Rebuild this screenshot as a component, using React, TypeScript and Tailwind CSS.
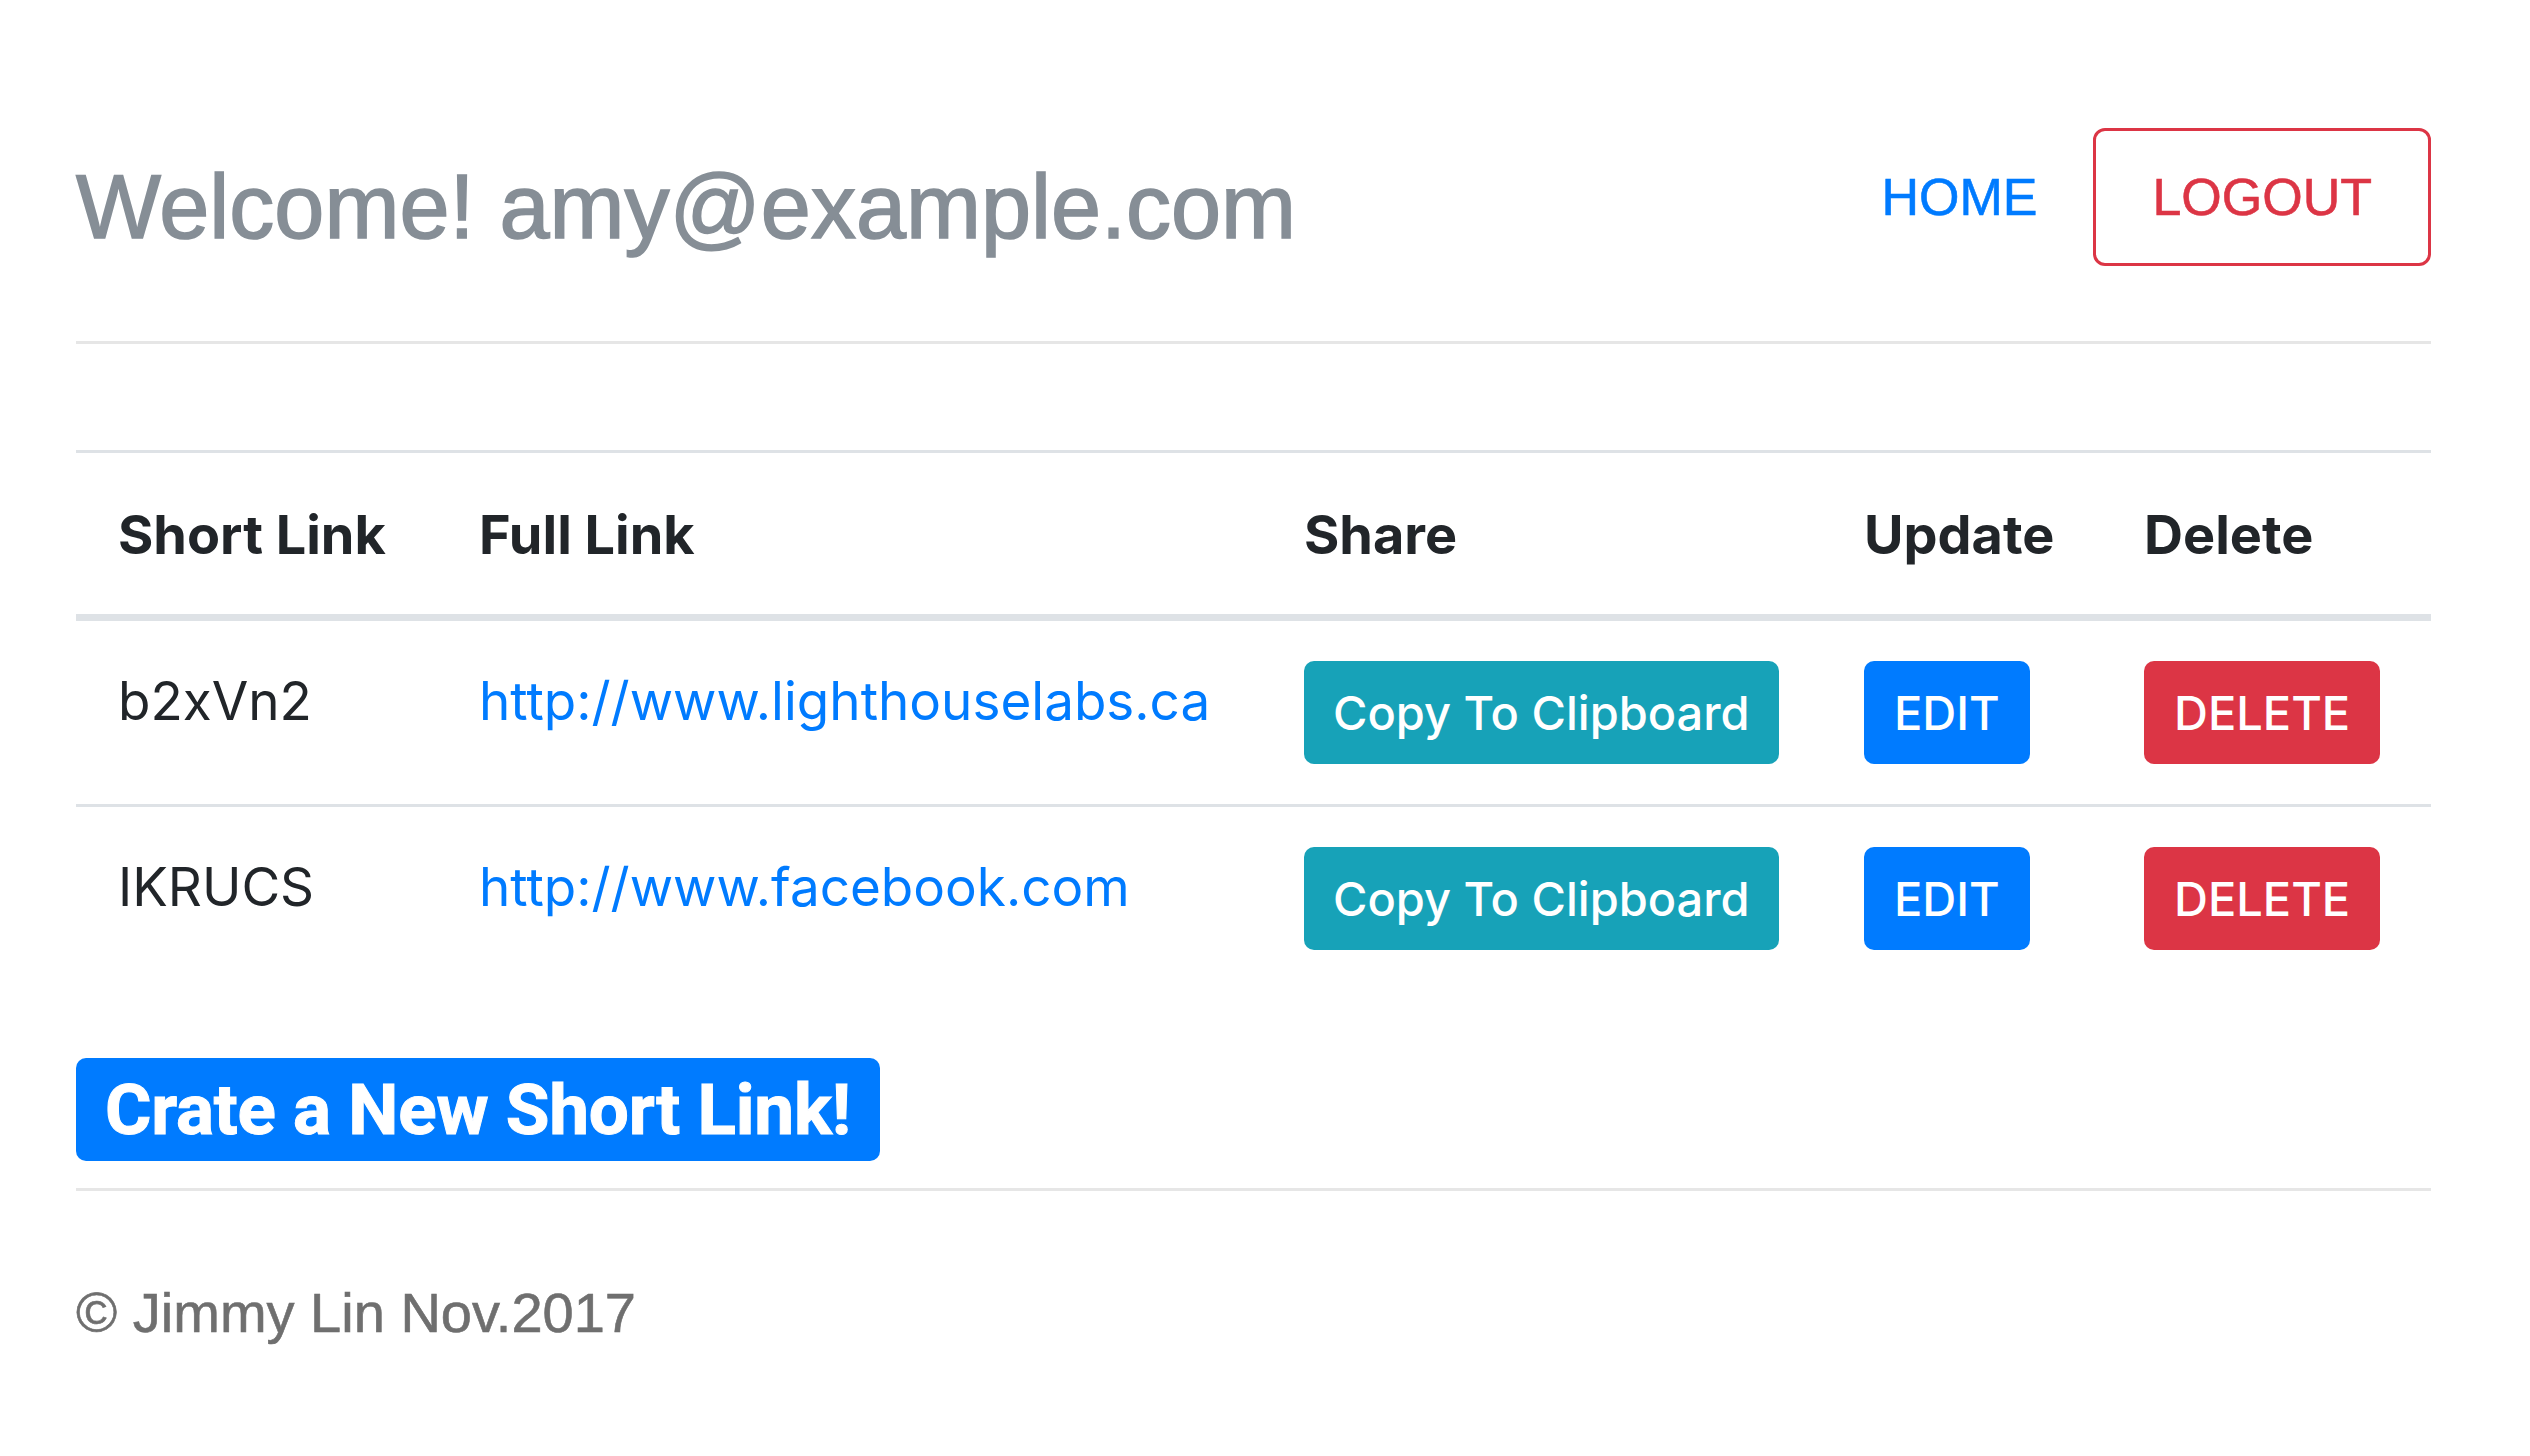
import React from "react";

const links = [
  { id: "b2xVn2", url: "http://www.lighthouselabs.ca" },
  { id: "IKRUCS", url: "http://www.facebook.com" },
];

const App = () => {
  return (
    <div className="min-h-[1456px] bg-white pl-[76px] pr-[99px] pt-[128px]">
      {/* header */}
      <div className="flex items-start justify-between">
        <h1 className="mt-[34px] font-['Liberation_Sans',Arial,sans-serif] text-[90px] leading-[90px] font-normal text-[#868e96] [-webkit-text-stroke:1.6px_#868e96]">
          Welcome! amy@example.com
        </h1>
        <div className="flex items-center gap-[56px] font-['Liberation_Sans',Arial,sans-serif] text-[52px]">
          <a className="text-[#007bff] leading-[60px] [-webkit-text-stroke:0.6px_#007bff]">HOME</a>
          <button className="h-[138px] rounded-[12px] border-[3px] border-[#dc3545] px-[56px] leading-[132px] text-[#dc3545] [-webkit-text-stroke:0.6px_#dc3545]">
            LOGOUT
          </button>
        </div>
      </div>
      <hr className="mt-[75px] border-0 border-t-[3px] border-[#e6e6e6]" />

      {/* table of links */}
      <table className="mt-[106px] w-full table-fixed border-t-[3px] border-[#dee2e6] font-['Inter',sans-serif] text-[#212529]">
        <colgroup>
          <col className="w-[361px]" />
          <col className="w-[825px]" />
          <col className="w-[560px]" />
          <col className="w-[280px]" />
          <col className="w-[329px]" />
        </colgroup>
        <thead>
          <tr className="border-b-[7px] border-[#dee2e6]">
            {["Short Link", "Full Link", "Share", "Update", "Delete"].map((h) => (
              <th key={h} className="px-[42px] pt-[42px] pb-[39px] text-left align-top text-[54px] leading-[80px] font-bold">
                {h}
              </th>
            ))}
          </tr>
        </thead>
        <tbody>
          {links.map((link, i) => (
            <tr key={link.id} className={i > 0 ? "border-t-[3px] border-[#dee2e6]" : ""}>
              <td className="px-[42px] py-[40px] align-top text-[53px] leading-[80px]">{link.id}</td>
              <td className="px-[42px] py-[40px] align-top text-[53px] leading-[80px]">
                <a className="text-[#007bff]">{link.url}</a>
              </td>
              <td className="px-[42px] py-[40px] align-top">
                <button className="flex h-[103px] items-center whitespace-nowrap rounded-[10px] bg-[#17a2b8] px-[29px] text-[47px] font-medium leading-none text-white">
                  Copy To Clipboard
                </button>
              </td>
              <td className="px-[42px] py-[40px] align-top">
                <button className="flex h-[103px] items-center rounded-[10px] bg-[#007bff] px-[30px] text-[47px] font-medium leading-none text-white">
                  EDIT
                </button>
              </td>
              <td className="px-[42px] py-[40px] align-top">
                <button className="flex h-[103px] items-center rounded-[10px] bg-[#dc3545] px-[30px] text-[47px] font-medium leading-none text-white">
                  DELETE
                </button>
              </td>
            </tr>
          ))}
        </tbody>
      </table>

      <button className="mt-[68px] flex h-[103px] items-center whitespace-nowrap rounded-[10px] bg-[#007bff] px-[29px] font-['Roboto',sans-serif] text-[71px] font-bold leading-none tracking-[-0.2px] text-white [-webkit-text-stroke:1px_#ffffff]">
        Crate a New Short Link!
      </button>
      <hr className="mt-[27px] border-0 border-t-[3px] border-[#e6e6e6]" />

      <footer className="mt-[80px] font-['Liberation_Sans',Arial,sans-serif] text-[56px] leading-[84px] text-[#6f6f6f] [-webkit-text-stroke:0.6px_#6f6f6f]">
        © Jimmy Lin Nov.2017
      </footer>
    </div>
  );
};

export default App;
